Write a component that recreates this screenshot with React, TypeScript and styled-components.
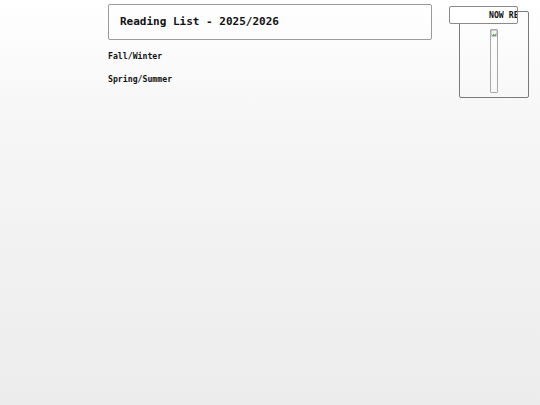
import React from "react";
import styled, { createGlobalStyle } from "styled-components";

const Global = createGlobalStyle`
  html, body { margin: 0; padding: 0; }
  body {
    min-height: 405px;
    background: linear-gradient(180deg, #ffffff 0%, #f6f6f6 30%, #ececec 100%);
    font-family: "DejaVu Sans Mono", "Liberation Mono", monospace;
    color: #111;
  }
`;

const Page = styled.div`
  display: flex;
  align-items: flex-start;
  min-height: 405px;
`;

const Main = styled.main`
  margin-left: 108px;
  width: 324px;
  padding-top: 4px;
  display: flex;
  flex-direction: column;
`;

const TitleBox = styled.header`
  box-sizing: border-box;
  height: 36px;
  border: 1px solid #9a9a9a;
  border-radius: 2px;
  display: flex;
  align-items: center;
  padding-left: 11px;
  padding-bottom: 1px;
`;

const Title = styled.h1`
  margin: 0;
  font-size: 11px;
  font-weight: bold;
  letter-spacing: 0;
`;

const SeasonList = styled.div`
  display: flex;
  flex-direction: column;
  gap: 13px;
  margin-top: 11px;
`;

const Season = styled.h2`
  margin: 0;
  font-size: 8.2px;
  line-height: 10px;
  font-weight: bold;
`;

const Sidebar = styled.aside`
  position: relative;
  box-sizing: border-box;
  margin-left: 27px;
  margin-top: 11px;
  width: 70px;
  height: 87px;
  border: 1px solid #7a7a7a;
  border-radius: 2px;
  display: flex;
  justify-content: center;
  padding-top: 17px;
`;

const SidebarTab = styled.div`
  position: absolute;
  left: -11px;
  top: -6px;
  box-sizing: border-box;
  width: 69px;
  height: 18px;
  background: #fff;
  border: 1px solid #8a8a8a;
  border-radius: 2px;
  overflow: hidden;
  white-space: nowrap;
  padding-left: 39px;
  font-size: 8.2px;
  font-weight: bold;
  line-height: 16px;
`;

const Cover = styled.div`
  box-sizing: border-box;
  width: 8px;
  height: 64px;
  border: 1px solid #a8a8a8;
  border-radius: 1px;
  padding: 0;
  & > svg { display: block; }
`;

function BrokenImage() {
  return (
    <svg width="6" height="7" viewBox="0 0 6 7">
      <rect x="0.5" y="0.5" width="5" height="6" fill="#f2f2f2" stroke="#b0b0b0" strokeWidth="0.6" />
      <path d="M0.8 6 L2.5 3.8 L3.6 5 L5.2 3.5 L5.2 6 Z" fill="#5aa35a" />
    </svg>
  );
}

export default function App() {
  return (
    <>
      <Global />
      <Page>
        <Main>
          <TitleBox>
            <Title>Reading List - 2025/2026</Title>
          </TitleBox>
          <SeasonList>
            <Season>Fall/Winter</Season>
            <Season>Spring/Summer</Season>
          </SeasonList>
        </Main>
        <Sidebar>
          <SidebarTab>NOW READING</SidebarTab>
          <Cover>
            <BrokenImage />
          </Cover>
        </Sidebar>
      </Page>
    </>
  );
}
